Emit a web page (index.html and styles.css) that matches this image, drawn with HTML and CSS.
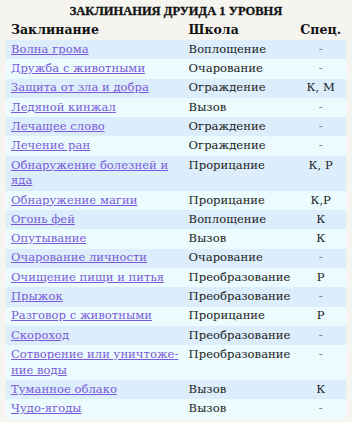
FILE: index.html
```html
<!DOCTYPE html>
<html lang="ru">
<head>
<meta charset="utf-8">
<link rel="stylesheet" href="styles.css">
</head>
<body>
<div class="page">
  <div class="title">ЗАКЛИНАНИЯ ДРУИДА 1 УРОВНЯ</div>
  <table class="spells">
    <thead>
      <tr><th class="c1">Заклинание</th><th class="c2">Школа</th><th class="c3">Спец.</th></tr>
    </thead>
    <tbody>
      <tr><td><a href="#">Волна грома</a></td><td>Воплощение</td><td class="c3"><span class="dash">-</span></td></tr>
      <tr><td><a href="#">Дружба с животными</a></td><td>Очарование</td><td class="c3"><span class="dash">-</span></td></tr>
      <tr><td><a href="#">Защита от зла и добра</a></td><td>Ограждение</td><td class="c3">К, М</td></tr>
      <tr><td><a href="#">Ледяной кинжал</a></td><td>Вызов</td><td class="c3"><span class="dash">-</span></td></tr>
      <tr><td><a href="#">Лечащее слово</a></td><td>Ограждение</td><td class="c3"><span class="dash">-</span></td></tr>
      <tr><td><a href="#">Лечение ран</a></td><td>Ограждение</td><td class="c3"><span class="dash">-</span></td></tr>
      <tr><td><a href="#">Обнаружение болезней и яда</a></td><td>Прорицание</td><td class="c3">К, Р</td></tr>
      <tr><td><a href="#">Обнаружение магии</a></td><td>Прорицание</td><td class="c3">К,Р</td></tr>
      <tr><td><a href="#">Огонь фей</a></td><td>Воплощение</td><td class="c3">К</td></tr>
      <tr><td><a href="#">Опутывание</a></td><td>Вызов</td><td class="c3">К</td></tr>
      <tr><td><a href="#">Очарование личности</a></td><td>Очарование</td><td class="c3"><span class="dash">-</span></td></tr>
      <tr><td><a href="#">Очищение пищи и питья</a></td><td>Преобразование</td><td class="c3">Р</td></tr>
      <tr><td><a href="#">Прыжок</a></td><td>Преобразование</td><td class="c3"><span class="dash">-</span></td></tr>
      <tr><td><a href="#">Разговор с животными</a></td><td>Прорицание</td><td class="c3">Р</td></tr>
      <tr><td><a href="#">Скороход</a></td><td>Преобразование</td><td class="c3"><span class="dash">-</span></td></tr>
      <tr><td><a href="#">Сотворение или уничтоже&shy;ние воды</a></td><td>Преобразование</td><td class="c3"><span class="dash">-</span></td></tr>
      <tr><td><a href="#">Туманное облако</a></td><td>Вызов</td><td class="c3">К</td></tr>
      <tr><td><a href="#">Чудо-ягоды</a></td><td>Вызов</td><td class="c3"><span class="dash">-</span></td></tr>
    </tbody>
  </table>
</div>
</body>
</html>
```
FILE: styles.css
```css
html, body {
  margin: 0;
  padding: 0;
}
body {
  background: #f6f4ef;
  font-family: "DejaVu Serif", "Liberation Serif", serif;
  color: #222;
  width: 352px;
  height: 422px;
  overflow: hidden;
}
.page {
  padding: 4px 6px 0 6px;
}
.title {
  text-align: center;
  font-family: "Liberation Serif", serif;
  font-weight: bold;
  font-size: 12.5px;
  line-height: 14px;
  color: #111;
  margin-bottom: 3px;
  -webkit-text-stroke: 0.3px #111;
}
.spells {
  width: 340px;
  border-collapse: collapse;
  font-size: 11.6px;
}
.spells th {
  font-weight: bold;
  text-align: left;
  font-size: 12.5px;
  line-height: 16px;
  padding: 1px 5px 2px 5px;
  color: #111;
}
.spells th.c3 {
  text-align: center;
}
.spells td {
  line-height: 15.7px;
  padding: 1.8px 5px;
  vertical-align: top;
}
.spells .c1 { width: 169px; }
.spells .c2 { width: 98px; }
.spells td.c3 { text-align: center; }
.spells tbody tr:nth-child(odd) { background: #dcedfc; }
.spells tbody tr:nth-child(even) { background: #ebfbfe; }
.spells a {
  color: #7a5ad8;
  text-decoration: underline;
}
.dash {
  color: #777;
}
```
